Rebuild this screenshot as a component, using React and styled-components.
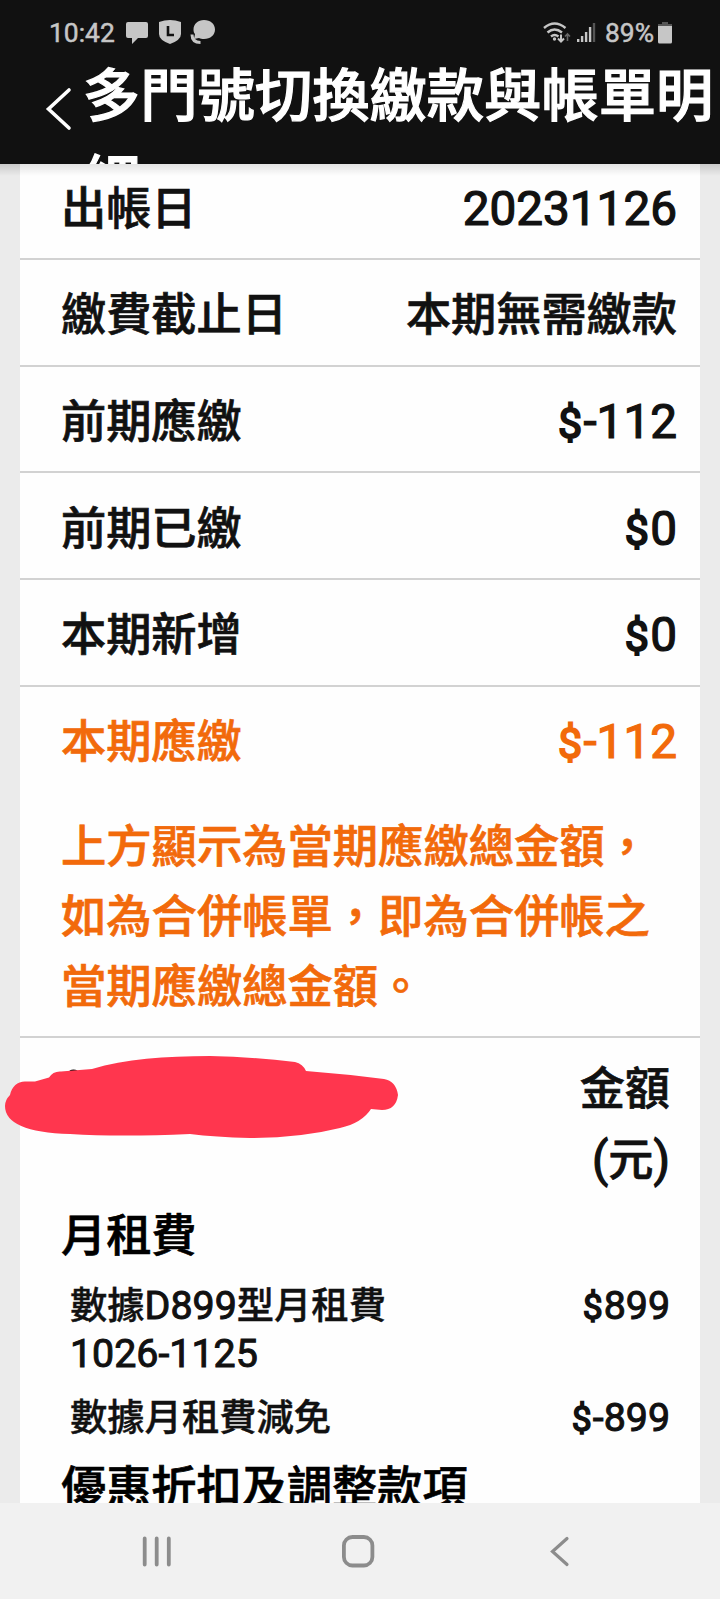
import React from "react";
import styled, { createGlobalStyle } from "styled-components";

const GlobalStyle = createGlobalStyle`
  body {
    margin: 0;
    background-color: #ebebeb;
    font-family: Roboto, "Noto Sans CJK TC", sans-serif;
    font-weight: 500;
    color: #111;
    -webkit-text-stroke: 0.7px;
  }
`;

const Screen = styled.div`
  display: flex;
  flex-direction: column;
  width: 720px;
  height: 1599px;
  overflow: hidden;
`;

const Header = styled.header`
  flex: none;
  height: 164px;
  overflow: hidden;
  background-color: #111;
  color: #fff;
`;

const StatusBar = styled.div`
  display: flex;
  justify-content: space-between;
  align-items: center;
  box-sizing: border-box;
  height: 50px;
  padding: 16px 48px 0 49px;
  font-size: 26.4px;
  font-weight: 400;
  line-height: 34px;
  color: #c6c6c6;
  -webkit-text-stroke: 0.5px;
`;

const StatusGroup = styled.div`
  display: flex;
  align-items: center;

  svg {
    display: block;
    flex: none;
  }
`;

const Clock = styled.span`
  margin-right: 11px;
`;

const Battery = styled.span`
  margin-right: 4px;
`;

const TitleBar = styled.div`
  display: flex;
  align-items: flex-start;
  padding-left: 43px;
`;

const BackButton = styled.button`
  display: flex;
  flex: none;
  width: 40px;
  margin: 37px 0 0;
  padding: 0;
  border: 0;
  background: none;
`;

const Title = styled.h1`
  flex: 1;
  margin: 4px 0 0;
  font-size: 57.3px;
  font-weight: 500;
  line-height: 86px;
  -webkit-text-stroke: 1.2px;
`;

const Content = styled.main`
  flex: 1;
  min-height: 0;
  overflow: hidden;
  padding: 0 20px;
  background-image: linear-gradient(rgba(0, 0, 0, 0.14), transparent 12px);
`;

const Card = styled.div`
  background-color: #fefefe;
  background-image: linear-gradient(rgba(0, 0, 0, 0.1), transparent 12px);
`;

const Row = styled.div`
  display: flex;
  justify-content: space-between;
  align-items: baseline;
  box-sizing: border-box;
  height: 106.6px;
  padding: 23.4px 23px 0 41px;
  border-bottom: ${(props) => (props.$plain ? "0" : "2px solid #d2d2d2")};
  font-size: 45.2px;
  line-height: 64px;
  color: ${(props) => (props.$highlight ? "#f26a0b" : "inherit")};

  &:first-child {
    height: 96.2px;
    padding-top: 13px;
  }
`;

// Latin glyphs are set a little larger than the CJK text beside them
const Latin = styled.span`
  font-size: 1.055em;
  font-weight: 400;
  -webkit-text-stroke: 0.026em;
`;

const Dollar = styled.span`
  margin-right: 0.03em;
  font-size: 0.9em;
  -webkit-text-stroke: 0.045em;
`;

const Note = styled.p`
  box-sizing: border-box;
  height: 244.4px;
  margin: 0;
  padding: 19.4px 40px 0 41px;
  border-bottom: 2px solid #d2d2d2;
  font-size: 45.3px;
  line-height: 70px;
  color: #f26a0b;
`;

const Detail = styled.section`
  position: relative;
  padding: 17px 30px 0 41px;
`;

const AmountHead = styled.div`
  font-size: 45.2px;
  line-height: 70px;
  text-align: right;
`;

const Scribble = styled.svg`
  position: absolute;
  left: -20px;
  top: 10px;
`;

const GroupTitle = styled.h2`
  margin: 0;
  padding: ${(props) => props.$gap}px 0 2px;
  font-size: 45.2px;
  font-weight: 500;
  line-height: 70px;
  color: #000;
`;

const Item = styled.div`
  display: flex;
  justify-content: space-between;
  align-items: baseline;
  padding: 8px 0 8px 9px;
  font-size: 37.3px;
  line-height: 48px;
  -webkit-text-stroke: 0.4px;
`;

const NavBar = styled.nav`
  display: flex;
  justify-content: space-between;
  flex: none;
  box-sizing: border-box;
  height: 96px;
  padding: 30px 148px 0 140px;
  background-color: #f1f1f1;
`;

function Amount({ value }) {
  return (
    <Latin>
      <Dollar>$</Dollar>
      {value}
    </Latin>
  );
}

const bill = [
  { label: "出帳日", value: <Latin>20231126</Latin> },
  { label: "繳費截止日", value: "本期無需繳款" },
  { label: "前期應繳", value: <Amount value="-112" /> },
  { label: "前期已繳", value: <Amount value="0" /> },
  { label: "本期新增", value: <Amount value="0" /> },
];

function NotificationIcons() {
  return (
    <svg width="92" height="28" viewBox="0 0 92 28" fill="#c6c6c6">
      <path d="M2 3h18a2 2 0 0 1 2 2v12a2 2 0 0 1-2 2h-8l-6 6v-6H2a2 2 0 0 1-2-2V5a2 2 0 0 1 2-2z" />
      <path d="M33 3q11-4 22 0v12q0 6-11 10q-11-4-11-10z" />
      <path d="M42 7v9h6" fill="none" stroke="#111" strokeWidth="2.6" />
      <path d="M78 1c6.500 0 11 4 11 9.500S84.500 20 78 20c-2 0-3.500-.4-5-1l-5 1 1-5C68 14 67.500 12.500 67.500 10.500 67.500 5 72 1 78 1z" />
      <path
        d="M66 15.500c0 5 3 8 8.500 8"
        fill="none"
        stroke="#c6c6c6"
        strokeWidth="3"
      />
    </svg>
  );
}

function SignalIcons() {
  return (
    <svg width="62" height="24" viewBox="0 0 62 24" fill="none">
      <g stroke="#c6c6c6" strokeWidth="2.400">
        <path d="M1 7q10.500-9 21.500 0" />
        <path d="M4.500 11.500q7-6 14.500 0" />
        <path d="M8 15.500q3.500-3 7.500 0" />
        <path d="M18 13.500v7M15 17.500l3 3 3-3" strokeWidth="2" />
      </g>
      <circle cx="11.500" cy="18" r="1.700" fill="#c6c6c6" />
      <path d="M24.500 20v-7M22 15.500l2.500-2.500 2.500 2.500" stroke="#666" strokeWidth="1.600" />
      <g strokeWidth="2.400">
        <path
          d="M35.200 21v-3M39.100 21v-6M43.100 21v-10M47.100 21v-15"
          stroke="#c6c6c6"
        />
        <path d="M51 21V2" stroke="#555" />
      </g>
    </svg>
  );
}

function BatteryIcon() {
  return (
    <svg width="14" height="22" viewBox="0 0 14 22">
      <path d="M4 0h6v2h4v4H0V2h4z" fill="#555" />
      <path d="M0 4h14v16a1.500 1.500 0 0 1-1.500 1.500h-11A1.500 1.500 0 0 1 0 20z" fill="#c6c6c6" />
    </svg>
  );
}

function App() {
  return (
    <Screen>
      <GlobalStyle />
      <Header>
        <StatusBar>
          <StatusGroup>
            <Clock>10:42</Clock>
            <NotificationIcons />
          </StatusGroup>
          <StatusGroup>
            <SignalIcons />
            <Battery>89%</Battery>
            <BatteryIcon />
          </StatusGroup>
        </StatusBar>
        <TitleBar>
          <BackButton>
            <svg width="30" height="44" viewBox="0 0 30 44" fill="none">
              <path
                d="M26 3L5.500 22L26 41"
                stroke="#fff"
                strokeWidth="3.600"
                strokeLinecap="round"
              />
            </svg>
          </BackButton>
          <Title>多門號切換繳款與帳單明細</Title>
        </TitleBar>
      </Header>
      <Content>
        <Card>
          {bill.map((row) => (
            <Row key={row.label}>
              <span>{row.label}</span>
              <span>{row.value}</span>
            </Row>
          ))}
          <Row $plain $highlight>
            <span>本期應繳</span>
            <Amount value="-112" />
          </Row>
          <Note>
            上方顯示為當期應繳總金額，
            <br />
            如為合併帳單，即為合併帳之
            <br />
            當期應繳總金額。
          </Note>
          <Detail>
            <AmountHead>
              金額
              <br />
              <Latin>(</Latin>元<Latin>)</Latin>
            </AmountHead>
            <Scribble width="410" height="100" viewBox="0 0 410 100">
              <ellipse cx="73.500" cy="24" rx="4.500" ry="2.500" fill="#111" />
              <path
                d="M10 47C12 38 18 33 26 33.500H35L49 29.500Q53 23 61 23.500L92 21C125 11 165 8 210 8Q255 9 295 14Q303 16 306 23Q345 26 384 31Q396 33 398 47Q396 62 382 62L371 61Q362 75 340 80Q300 90 250 90Q215 89 190 86Q120 89 70 86Q5 84 5 58Q5 52 10 47Z"
                fill="#ff364e"
              />
            </Scribble>
            <GroupTitle $gap={6}>月租費</GroupTitle>
            <Item>
              <span>
                數據<Latin>D899</Latin>型月租費
                <br />
                <Latin>1026-1125</Latin>
              </span>
              <Amount value="899" />
            </Item>
            <Item>
              <span>數據月租費減免</span>
              <Amount value="-899" />
            </Item>
            <GroupTitle $gap={3}>優惠折扣及調整款項</GroupTitle>
          </Detail>
        </Card>
      </Content>
      <NavBar>
        <svg width="34" height="36" viewBox="0 0 34 36" fill="none">
          <path
            d="M4.700 5.500v26M16.700 5.500v26M28.800 5.500v26"
            stroke="#8c8c8c"
            strokeWidth="3.800"
            strokeLinecap="round"
          />
        </svg>
        <svg width="38" height="36" viewBox="0 0 38 36" fill="none">
          <rect x="1.900" y="4" width="28.500" height="28.500" rx="8.500" stroke="#8c8c8c" strokeWidth="3.800" />
        </svg>
        <svg width="24" height="36" viewBox="0 0 24 36" fill="none">
          <path
            d="M19 5.500L4.500 18.500L19 31.500"
            stroke="#8c8c8c"
            strokeWidth="3.200"
            strokeLinecap="round"
          />
        </svg>
      </NavBar>
    </Screen>
  );
}

export default App;
